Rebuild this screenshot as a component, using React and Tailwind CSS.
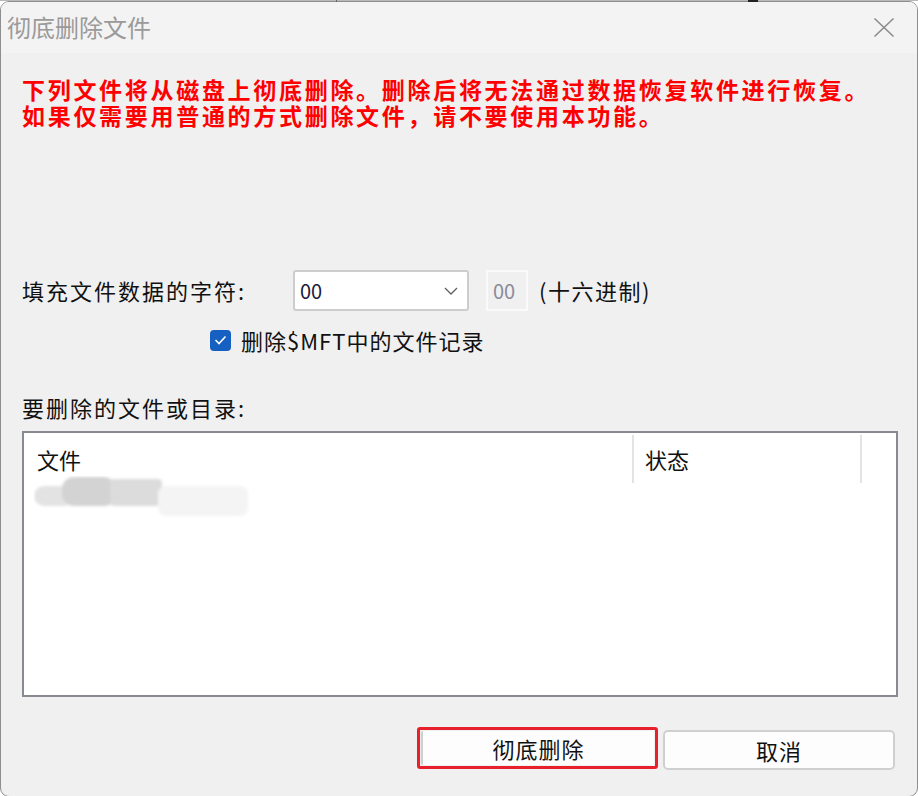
import React from "react";

const font = { fontFamily: '"Noto Sans CJK SC", "Noto Sans", sans-serif' };

function CloseIcon() {
  return (
    <svg width="22" height="21" viewBox="0 0 22 21" fill="none">
      <path d="M1.5 1.5 L20.5 19.5 M20.5 1.5 L1.5 19.5" stroke="#8c8c8c" strokeWidth="1.6" />
    </svg>
  );
}

function Chevron() {
  return (
    <svg width="14" height="8" viewBox="0 0 14 8" fill="none">
      <path d="M1 1 L7 7 L13 1" stroke="#606060" strokeWidth="1.3" />
    </svg>
  );
}

function Smudge() {
  return (
    <svg width="220" height="44" viewBox="0 0 220 44">
      <defs>
        <filter id="b" x="-10%" y="-30%" width="120%" height="160%">
          <feGaussianBlur stdDeviation="1.5" />
        </filter>
      </defs>
      <g filter="url(#b)">
        <rect x="0" y="10" width="40" height="20" rx="10" fill="#e3e3e3" />
        <rect x="28" y="1" width="54" height="29" rx="12" fill="#d3d3d3" />
        <rect x="76" y="3" width="52" height="27" rx="4" fill="#dcdcdc" />
        <rect x="124" y="10" width="90" height="30" rx="8" fill="#f4f4f4" />
      </g>
    </svg>
  );
}

export default function App() {
  return (
    <div className="w-[918px] h-[796px] bg-white overflow-hidden relative" style={font}>
      {/* background window peeking above */}
      <div className="h-[1px] bg-[#b8b8b8]" />
      <div className="absolute top-0 left-[336px] w-[1px] h-[2px] bg-[#666]" />
      <div className="absolute top-0 left-[748px] w-[10px] h-[2px] bg-[#222]" />

      <div className="h-[796px] rounded-[9px] border border-[#8e8e8e] overflow-hidden flex flex-col bg-[#f0f0f0]">
        {/* Title bar */}
        <div className="h-[51px] shrink-0 bg-[#f3f3f3] flex items-center justify-between pl-[6px] pr-[22px]">
          <span className="text-[24px] text-[#9a9a9a] leading-none -mt-[1px]">彻底删除文件</span>
          <CloseIcon />
        </div>

        {/* Body */}
        <div className="flex-1 flex flex-col pl-[21px] pr-[20px]">
          <div className="mt-[23px] text-[23px] leading-[26px] font-bold text-[#ff0000] tracking-[2.7px]">
            <div>下列文件将从磁盘上彻底删除。删除后将无法通过数据恢复软件进行恢复。</div>
            <div>如果仅需要用普通的方式删除文件，请不要使用本功能。</div>
          </div>

          <div className="mt-[142px] flex items-center h-[41px]">
            <div className="w-[271px] text-[22px] tracking-[2px] text-[#111]">填充文件数据的字符:</div>
            <div className="w-[176px] h-[41px] bg-white border-2 border-[#cdcdcd] rounded-[3px] flex items-center justify-between pl-[5px] pr-[9px]">
              <span className="text-[20px] text-[#1a1a3a]">00</span>
              <Chevron />
            </div>
            <div className="ml-[17px] w-[42px] h-[41px] border-2 border-[#fafafa] flex items-center pl-[5px]">
              <span className="text-[20px] text-[#8a8a9a]">00</span>
            </div>
            <span className="ml-[11px] text-[22px] tracking-[1.5px] text-[#111]">(十六进制)</span>
          </div>

          <div className="mt-[17px] ml-[188px] flex items-center h-[24px]">
            <div className="w-[21px] h-[21px] rounded-[4px] bg-[#1560c0] flex items-center justify-center">
              <svg width="13" height="10" viewBox="0 0 13 10" fill="none">
                <path d="M1.5 5 L5 8.5 L11.5 1.5" stroke="#fff" strokeWidth="1.6" />
              </svg>
            </div>
            <span className="ml-[10px] text-[22px] tracking-[1px] text-[#111]">删除$MFT中的文件记录</span>
          </div>

          <div className="mt-[40px] text-[22px] leading-[30px] tracking-[2px] text-[#111]">要删除的文件或目录:</div>

          <div className="mt-[9px] w-[876px] h-[266px] border-2 border-[#878a90] bg-white flex flex-col pt-[2px]">
            <div className="flex h-[48px] text-[22px] text-[#111]">
              <div className="w-[608px] pl-[13px] flex items-center">文件</div>
              <div className="w-[2px] bg-[#e3e3e3]" />
              <div className="w-[226px] pl-[11px] flex items-center">状态</div>
              <div className="w-[2px] bg-[#e3e3e3]" />
            </div>
            <div className="pl-[10px] -mt-[7px]">
              <Smudge />
            </div>
          </div>

          <div className="mt-[30px] flex items-start">
            <div className="ml-[395px] w-[241px] h-[42px] border-[3px] border-[#e8202c] rounded-[3px] p-[1px]">
              <div className="h-full bg-[#fdfdfd] border-l-2 border-[#cfcfcf] rounded-[2px] flex items-center justify-center text-[22px] tracking-[1px] text-[#111]">
                彻底删除
              </div>
            </div>
            <div className="ml-[5px] mt-[3px] w-[232px] h-[40px] bg-[#fdfdfd] border-2 border-[#d0d0d0] rounded-[5px] flex items-center justify-center text-[22px] tracking-[1px] text-[#111]">
              取消
            </div>
          </div>
        </div>
      </div>
    </div>
  );
}
